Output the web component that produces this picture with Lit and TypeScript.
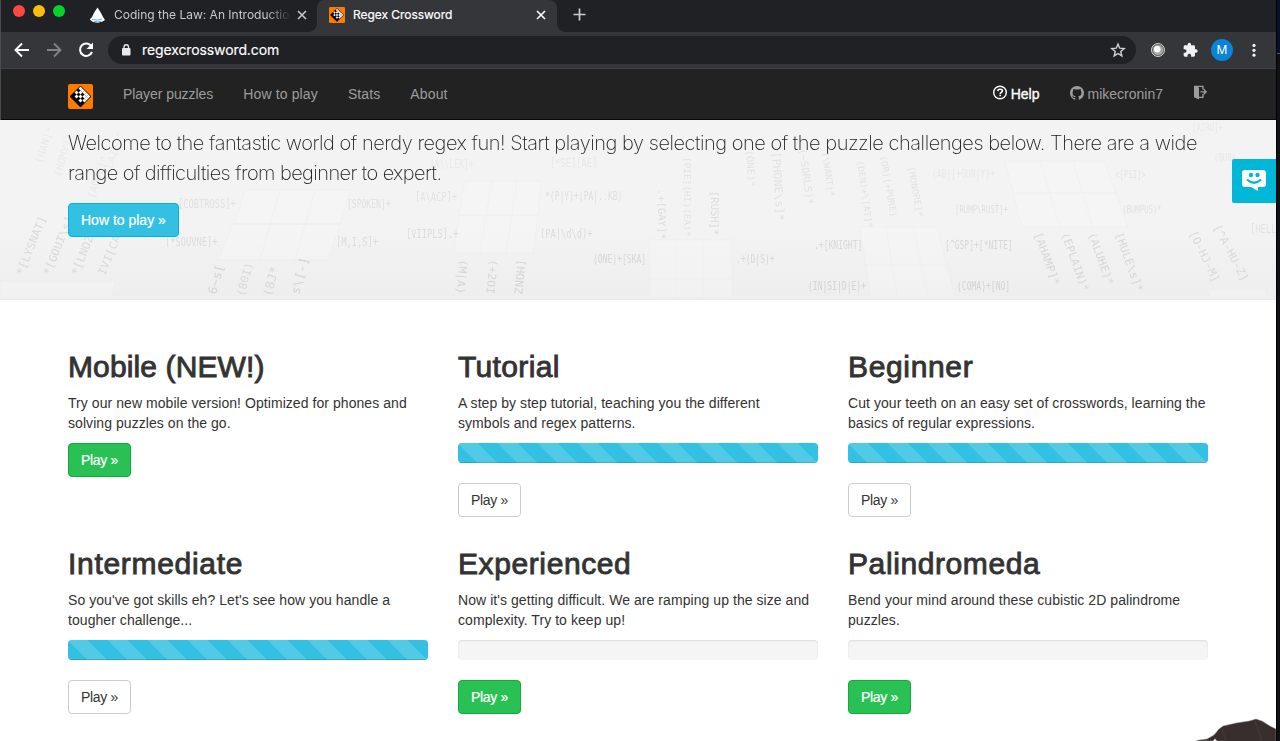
import { LitElement, html, css, svg, nothing } from "lit";
import { customElement, property } from "lit/decorators.js";
import { classMap } from "lit/directives/class-map.js";

interface Puzzle { title: string; text: string; kind: "none" | "done" | "empty"; spacing: number; }

const PUZZLES: Puzzle[] = [
  { title: "Mobile (NEW!)", text: "Try our new mobile version! Optimized for phones and solving puzzles on the go.", kind: "none", spacing: 0.12 },
  { title: "Tutorial", text: "A step by step tutorial, teaching you the different\nsymbols and regex patterns.", kind: "done", spacing: 0.35 },
  { title: "Beginner", text: "Cut your teeth on an easy set of crosswords, learning the basics of regular expressions.", kind: "done", spacing: 0.65 },
  { title: "Intermediate", text: "So you've got skills eh? Let's see how you handle a tougher challenge...", kind: "done", spacing: 0.7 },
  { title: "Experienced", text: "Now it's getting difficult. We are ramping up the size and complexity. Try to keep up!", kind: "empty", spacing: 0.6 },
  { title: "Palindromeda", text: "Bend your mind around these cubistic 2D palindrome puzzles.", kind: "empty", spacing: 0.6 },
];

const LOGO_ROWS = ["11111", "01011", "10101", "01010", "00000"];

const logo = (size: number) => html`<svg width=${size} height=${size} viewBox="0 0 25 25">
  <rect width="25" height="25" rx="2" fill="#ff7b00"/>
  <g transform="translate(12.5 1.6) rotate(45)">
    <rect width="15.4" height="15.4" rx="1" fill="#0b0603"/>
    ${LOGO_ROWS.map((row, r) => [...row].map((c, i) => c === "1" ? svg`<rect x=${0.7 + i * 2.8} y=${0.7 + r * 2.8} width="2.8" height="2.8" fill="#fff"/>` : nothing))}
  </g></svg>`;

@customElement("puzzle-card")
export class PuzzleCard extends LitElement {
  @property({ attribute: false }) puzzle!: Puzzle;
  static styles = css`
    :host { display: block; }
    h2 { margin: 0 0 10px; font-size: 30px; line-height: 33px; font-weight: 400; -webkit-text-stroke: 0.9px #333; white-space: nowrap; }
    p { margin: 0 0 10px; font-size: 14px; line-height: 20px; letter-spacing: .06px; white-space: pre-line; }
    .bar { height: 20px; border-radius: 4px; margin-bottom: 20px; background: #f5f5f5; box-shadow: inset 0 1px 2px rgba(0,0,0,.1); overflow: hidden; }
    .fill { height: 100%; background: #33c1e3 linear-gradient(45deg, rgba(255,255,255,.15) 25%, transparent 25%, transparent 50%, rgba(255,255,255,.15) 50%, rgba(255,255,255,.15) 75%, transparent 75%, transparent) 0 0 / 40px 40px; box-shadow: inset 0 -1px 0 rgba(0,0,0,.15); }
    .btn { box-sizing: border-box; display: inline-flex; align-items: center; height: 34px; padding: 0 12px; border: 1px solid #ccc; border-radius: 4px; font-size: 14px; letter-spacing: -.3px; color: #333; background: #fff; }
    .go { color: #fff; background: #29c154; border-color: #12ab3e; -webkit-text-stroke: .2px #fff; }
  `;
  render() {
    const p = this.puzzle;
    return html`<h2 style="letter-spacing:${p.spacing}px">${p.title}</h2><p>${p.text}</p>
      ${p.kind === "none" ? nothing : html`<div class="bar">${p.kind === "done" ? html`<div class="fill"></div>` : nothing}</div>`}
      <a class=${classMap({ btn: true, go: p.kind !== "done" })}>Play »</a>`;
  }
}

// Each clue: x, y, rotation, text, font size, strength
const CLUES: [number, number, number, string, number, number][] = [
  [23, 277, -68, "*[LYSNAT]", 11, .75], [50, 277, -68, "*[GOUI\\s]", 11, .75], [78, 277, -68, "*[LNOZ]", 11, .75], [105, 277, -68, "IVI[CA]", 11, .7],
  [42, 165, -72, "[HAN]*", 10, .3], [60, 178, -72, "[HOMY]*", 10, .3], [94, 200, -72, "[AOUE]*", 10, .35], [110, 176, -72, "(LAZY)*", 10, .25],
  [178, 209, 0, "[COBTROSS]+", 11, .55], [347, 209, 0, "[SPOKEN]+", 10, .55], [165, 247, 0, "[*SOUVNE]+", 11, .65], [336, 247, 0, "[M,I,S]+", 11, .65],
  [415, 202, 0, "[A\\ACP]+", 11, .5], [406, 239, 0, "[VIIPLS].+", 11, .65], [545, 201, 0, "*(P|Y)+(PA|..KB)", 10, .6], [540, 239, 0, "(PA|\\d\\d)+", 11, .7], [550, 168, 0, "[*SE][AE]", 11, .35], [430, 169, 0, "[A\\\\LEK]+", 10, .3],
  [216, 296, -75, "6~s[", 12, .85], [244, 298, -75, "(80I)", 11, .7], [271, 298, -75, "(8J*", 12, .75], [299, 296, -75, "s\\[-]", 12, .85],
  [460, 260, 96, "(M|A)", 11, .8], [490, 260, 96, "(+2OI", 11, .8], [518, 260, 96, "[HONZ", 11, .8],
  [658, 190, 89, ".+[GAY]*", 10, .65], [684, 158, 90, "[PIE](HI)(EA)*", 9, .5], [711, 192, 90, "[RUSH]*", 10, .65], [746, 151, 86, "(ONE)*", 10, .45], [772, 153, 86, "[PHONE\\s]*", 11, .5], [799, 150, 82, "(~SORLS)*", 10, .5], [822, 153, 82, "T\\WANT)*", 9, .5],
  [857, 162, 82, "(DEN)+\\[AT]*", 9, .5], [880, 157, 80, "(OR)(+PURE)", 9, .5], [908, 168, 80, "[MONORE]*", 9, .5],
  [593, 264, 0, "(ONE)+[SKA]", 10, .8], [736, 264, 0, ".+(D|S)+", 10, .8], [814, 250, 0, ".+[KNIGHT]", 10, .8], [808, 291, 0, "(IN|SI|D|E)+", 10, .9], [945, 250, 0, "[^GSP]+[*NITE]", 10, .8], [957, 291, 0, "(COMA)+[NO]", 10, .9],
  [932, 179, 0, "(AB|[+GUN|Y)+", 10, .35], [955, 214, 0, "[RUMP\\RUST]+", 9, .55], [1115, 179, 0, "<[PSI]>", 9, .45], [1122, 214, 0, "(BUMPUS)*", 9, .5], [1192, 132, 0, "[AIRU]+", 9, .3], [1214, 162, 0, "(BUR)", 9, .3], [1250, 234, 0, "[HELL", 11, .5],
  [1034, 235, 70, "[AHAMP]*", 11, .8], [1061, 235, 70, "(EPLAIN)*", 11, .8], [1088, 235, 70, "(ALUHE)*", 11, .8], [1115, 235, 70, "[HULE\\s]*", 11, .8], [1189, 234, 64, "[O-HJ-M]", 11, .75], [1213, 228, 62, "[^A-HU-Z]", 11, .75],
];

const GRIDS = [
  "M245 191h105l-10 34H235zM233 225h107l-12 36H218zM280 191l-20 70M315 191l-20 70M0 282h115l-3 16H0z",
  "M465 182h76l-3 34h-79zM459 216h79l-5 38h-79zM492 182l-12 72M517 182l-11 72",
  "M650 241h82v58h-82zM650 280h82M676 241v58M703 241v58",
  "M860 228h77l18 70h-84zM863 266h83M886 228l11 70M913 228l15 70",
  "M1005 162h99l24 66h-106zM1014 194h102M1040 162l20 66M1073 162l20 66M1210 291h56v7h-56z",
];

@customElement("app-root")
export class AppRoot extends LitElement {
  static styles = css`
    :host { display: flex; width: 1280px; height: 741px; overflow: hidden; background: #0a0b0e; font-family: "Liberation Sans", Arial, sans-serif; color: #333; }
    .window { position: relative; width: 1276px; height: 741px; background: #fff; overflow: hidden; flex: none; }
    .edge { flex: 1; background: linear-gradient(#071129 0 53px, #55575c 53px 54px, #101114 54px 100%); border-left: 1px solid #030303; }
    svg { display: block; flex: none; }
    .tabs { display: flex; height: 32px; background: #202124; font: 12px Inter, Roboto, sans-serif; color: #c6c8cc; }
    .lights { display: flex; gap: 8px; padding: 5px 0 0 13px; width: 77px; box-sizing: border-box; }
    .lights i { width: 12px; height: 12px; border-radius: 50%; background: #ff4640; }
    .lights i:nth-child(2) { background: #fdbc0c; }
    .lights i:nth-child(3) { background: #08d32c; }
    .tab { display: flex; align-items: center; box-sizing: border-box; height: 30px; width: 240px; padding: 0 10px 0 12px; }
    .tab span { flex: 1; margin-left: 8px; white-space: nowrap; overflow: hidden; line-height: 18px; }
    .tab .cut { flex: none; width: 177px; margin-right: 6px; -webkit-mask-image: linear-gradient(90deg, #000 152px, transparent 177px); }
    .tab.on { position: relative; height: 32px; padding: 0 11px 2px 12px; background: #35363a; color: #fff; border-radius: 8px 8px 0 0; }
    .tab.on span { letter-spacing: -.05px; -webkit-text-stroke: .2px #fff; }
    .tab.on::before, .tab.on::after { content: ""; position: absolute; bottom: 0; width: 8px; height: 8px; left: -8px; background: radial-gradient(circle at 0 0, transparent 7.5px, #35363a 8px); }
    .tab.on::after { left: auto; right: -8px; background: radial-gradient(circle at 100% 0, transparent 7.5px, #35363a 8px); }
    .plus { margin: 8px 0 0 15.5px; }
    .tools { box-sizing: border-box; display: flex; align-items: center; height: 37px; padding: 0 11px 1px 12px; background: #35363a; border-bottom: 1px solid #3f4044; }
    .tools .nav { margin-right: 12px; }
    .omni { display: flex; align-items: center; box-sizing: border-box; width: 1028px; height: 28px; border-radius: 14px; background: #202124; color: #fff; font: 14px Inter, Roboto, sans-serif; letter-spacing: -.11px; padding: 0 10px 0 12px; }
    .omni span { flex: 1; margin-left: 10px; -webkit-text-stroke: .15px #fff; }
    .ext { display: flex; align-items: center; flex: 1; padding-left: 14px; }
    .puzzle { margin-left: 16px; }
    .avatar { width: 22px; height: 22px; border-radius: 50%; background: #0a84d8; color: #fff; font: 12px/22px Inter, sans-serif; text-align: center; margin: 0 13px 0 13px; }
    .navbar { box-sizing: border-box; display: flex; height: 51px; padding: 0 68px; background: #222; border-bottom: 1px solid #080808; color: #9d9d9d; font-size: 14px; line-height: 20px; }
    .navbar > svg { margin-top: 15px; }
    .links { display: flex; gap: 30px; padding: 15px 0 0 30px; flex: 1; }
    .links a:nth-child(1) { letter-spacing: -.06px; }
    .links a:nth-child(2) { letter-spacing: .14px; }
    .links a:nth-child(3) { letter-spacing: .1px; }
    .links a:nth-child(4) { letter-spacing: .15px; }
    .right { display: flex; gap: 30px; padding: 15px 1px 0 0; }
    .right a { display: flex; gap: 4px; }
    .right svg { margin-top: 1px; }
    .help { color: #fff; -webkit-text-stroke: .35px #fff; }
    .hero { position: relative; height: 180px; box-sizing: border-box; padding: 8px 68px 0; background: linear-gradient(#f3f3f3 60%, #eee); border-bottom: 1px solid #ececec; }
    .art { position: absolute; inset: 0; }
    .clues { filter: blur(.6px); }
    .hero p { position: relative; margin: 0 0 15px; font: 200 20px/30px Inter, "Liberation Sans", sans-serif; white-space: nowrap; color: #1c1c1c; }
    .l1, .l2 { display: block; }
    .l1 { letter-spacing: -.46px; }
    .l2 { letter-spacing: -.58px; }
    .how { position: relative; box-sizing: border-box; display: inline-flex; align-items: center; height: 34px; padding: 0 12px; border: 1px solid #00b4dc; border-radius: 4px; background: #33c1e3; color: #fff; font-size: 14px; -webkit-text-stroke: .2px #fff; }
    .grid { display: grid; grid-template-columns: repeat(3, 360px); gap: 30px; padding: 50px 68px 0; }
    .chat { position: absolute; right: 0; top: 159px; width: 44px; height: 44px; background: #00b7d8; border-radius: 2px 0 0 2px; }
    .beast { position: absolute; right: 0; bottom: 0; }
    .line { position: absolute; left: 0; top: 0; width: 1px; height: 120px; background: #4a4b4f; }
  `;

  private cross(color: string) {
    return html`<svg width="10" height="10" viewBox="0 0 10 10"><path d="M1 1l8 8M9 1L1 9" stroke=${color} stroke-width="1.6"/></svg>`;
  }

  render() {
    return html`
    <div class="window">
      <div class="tabs">
        <div class="lights"><i></i><i></i><i></i></div>
        <div class="tab">
          <svg width="17" height="17" viewBox="0 0 17 17"><path d="M8.500.5L12 6l2 4 2 3-2.500 1.500-4.500 1.200-5-.8L.8 12.500 3 10l2.500-5z" fill="#fff"/><path d="M3 12.500q6 1.500 10-.5M5 14.500q4 1 7-.3" stroke="#65aef0" fill="none"/></svg>
          <span class="cut">Coding the Law: An Introductio</span>${this.cross("#c6c8cc")}
        </div>
        <div class="tab on">${logo(16)}<span>Regex Crossword</span>${this.cross("#fff")}</div>
        <svg class="plus" width="13" height="13" viewBox="0 0 13 13"><path d="M6.500.5v12M.5 6.500h12" stroke="#c9cbce" stroke-width="1.700"/></svg>
      </div>
      <div class="tools">
        <svg class="nav" width="20" height="20" viewBox="0 0 20 20"><path d="M17 10H4M10 3.500L3.500 10l6.500 6.500" fill="none" stroke="#fff" stroke-width="1.900"/></svg>
        <svg class="nav" width="20" height="20" viewBox="0 0 20 20"><path d="M3 10h13M10 3.500l6.500 6.500-6.500 6.500" fill="none" stroke="#818286" stroke-width="1.900"/></svg>
        <svg class="nav" width="20" height="20" viewBox="0 0 20 20"><path d="M15.400 6.200A6.200 6.200 0 1 0 16 12" fill="none" stroke="#fff" stroke-width="2"/><path d="M17 2.500V9h-6.500z" fill="#fff"/></svg>
        <div class="omni">
          <svg width="12" height="14" viewBox="0 0 12 14"><rect x="2" y="5" width="8.500" height="7.500" rx="1" fill="#e8eaed"/><path d="M4 5.500V4a2.250 2.250 0 0 1 4.500 0v1.500" fill="none" stroke="#e8eaed" stroke-width="1.300"/></svg>
          <span>regexcrossword.com</span>
          <svg width="16" height="16" viewBox="0 0 16 16"><path d="M8 2l1.700 4.200 4.500.35-3.450 2.950 1.050 4.400L8 11.500l-3.800 2.400 1.050-4.400L1.800 6.550l4.500-.35z" fill="none" stroke="#d0d2d5" stroke-width="1.400"/></svg>
        </div>
        <div class="ext">
          <svg width="16" height="16" viewBox="0 0 16 16"><circle cx="8" cy="8" r="6.500" fill="#a8a8a8" stroke="#d0d0d0"/><circle cx="8" cy="8" r="5.600" fill="none" stroke="#555" stroke-width=".8"/><circle cx="7.200" cy="7.200" r="3.200" fill="#fff"/></svg>
          <svg class="puzzle" width="16" height="16" viewBox="0 0 24 24"><path fill="#f1f1f3" d="M21 11h-1.500V7c0-1.100-.9-2-2-2h-4V3.500a2.500 2.500 0 0 0-5 0V5h-4c-1.100 0-2 .9-2 2v3.800H4c1.500 0 2.700 1.200 2.700 2.700S5.500 16.200 4 16.200H2.500V20c0 1.100.9 2 2 2h3.800v-1.500c0-1.500 1.200-2.700 2.700-2.700s2.700 1.200 2.700 2.700V22h3.800c1.100 0 2-.9 2-2v-4H21a2.500 2.500 0 0 0 0-5z"/></svg>
          <div class="avatar">M</div>
          <svg width="16" height="16" viewBox="0 0 16 16"><g fill="#f1f1f3"><circle cx="8" cy="3.400" r="1.600"/><circle cx="8" cy="8.300" r="1.600"/><circle cx="8" cy="13.200" r="1.600"/></g></svg>
        </div>
      </div>
      <div class="navbar">
        ${logo(25)}
        <div class="links"><a>Player puzzles</a><a>How to play</a><a>Stats</a><a>About</a></div>
        <div class="right">
          <a class="help"><svg width="14" height="16" viewBox="0 0 14 16"><circle cx="7" cy="7.500" r="6.300" fill="none" stroke="#fff" stroke-width="1.400"/><path d="M4.600 6Q5 4.300 7 4.300q2.400 0 2.400 1.600c0 1.300-2.200 1.500-2.200 3M7.200 9.800v1.400" fill="none" stroke="#fff" stroke-width="1.600"/></svg>Help</a>
          <a><svg width="14" height="16" viewBox="0 0 16 16"><path fill="#9d9d9d" fill-rule="evenodd" d="M8 0C3.580 0 0 3.580 0 8c0 3.540 2.290 6.530 5.470 7.590.4.070.55-.17.55-.38v-1.490c-2.230.48-2.700-.95-2.700-.95-.36-.93-.89-1.170-.89-1.170-.73-.5.060-.49.060-.49.810.06 1.230.83 1.230.83.720 1.230 1.880.87 2.340.67.070-.52.280-.87.510-1.070-1.780-.2-3.650-.89-3.650-3.950 0-.87.310-1.590.82-2.150-.08-.2-.36-1.020.08-2.120 0 0 .67-.22 2.200.82a7.600 7.600 0 0 1 4 0c1.530-1.040 2.200-.82 2.200-.82.440 1.100.16 1.920.08 2.120.51.560.82 1.280.82 2.150 0 3.070-1.870 3.750-3.650 3.950.29.250.54.730.54 1.480v2.200c0 .21.150.46.550.38A8 8 0 0 0 16 8c0-4.420-3.580-8-8-8z"/></svg>mikecronin7</a>
          <a><svg width="14" height="16" viewBox="0 0 14 16"><path fill="#9d9d9d" d="M1 .8L6 2.500v12L1 12.300z"/><path d="M1 1.400h9V4.500M10 9v3.300H6M7.500 6.800H12M10.700 4.300l2.500 2.500-2.500 2.500" fill="none" stroke="#9d9d9d" stroke-width="1.300"/></svg></a>
        </div>
      </div>
      <div class="hero">
        <svg class="art" width="1276" height="179" viewBox="0 121 1276 179">
          <g fill="#fff" fill-opacity=".2" stroke="#e9e9e9" stroke-width=".7" stroke-opacity=".5">${GRIDS.map((d) => svg`<path d=${d}/>`)}</g>
          <g class="clues" fill="#bdbdbd" font-family="DejaVu Sans Mono, monospace">${CLUES.map(([x, y, r, t, s, o]) => svg`<text transform="translate(${x} ${y}) rotate(${r}) scale(${r === 0 ? 0.7 : 1.05} 1)" font-size=${r === 0 ? s + 1.5 : s} opacity=${o * 0.62}>${t}</text>`)}</g>
        </svg>
        <p><span class="l1">Welcome to the fantastic world of nerdy regex fun! Start playing by selecting one of the puzzle challenges below. There are a wide</span><span class="l2">range of difficulties from beginner to expert.</span></p>
        <a class="how">How to play »</a>
      </div>
      <div class="grid">${PUZZLES.map((p) => html`<puzzle-card .puzzle=${p}></puzzle-card>`)}</div>
      <div class="chat"><svg width="44" height="44" viewBox="0 0 44 44"><path fill="#fff" d="M13 11h18q3 0 3 3v11q0 3-3 3h-5v4l-7-4h-6q-3 0-3-3V14q0-3 3-3z"/><circle cx="19" cy="16" r="2.200" fill="#00b7d8"/><circle cx="25.500" cy="16" r="2.200" fill="#00b7d8"/><path d="M15 20.500q7 6.500 14 0" fill="none" stroke="#00b7d8" stroke-width="2.200"/></svg></div>
      <svg class="beast" width="82" height="26" viewBox="0 0 82 26"><path d="M2 26l3-1 8-1 7-4 5-6 4-3 13-3 13-2 7-2 6 2 8 5 6 3v13z" fill="#392e2e" stroke="#999" stroke-width=".5"/><path d="M28 14l4 12M61 6l7 20" stroke="#463a3a" fill="none"/><path d="M19 26l2-2.500 2 2.500z" fill="#eee"/></svg>
      <div class="line"></div>
    </div>
    <div class="edge"></div>`;
  }
}
